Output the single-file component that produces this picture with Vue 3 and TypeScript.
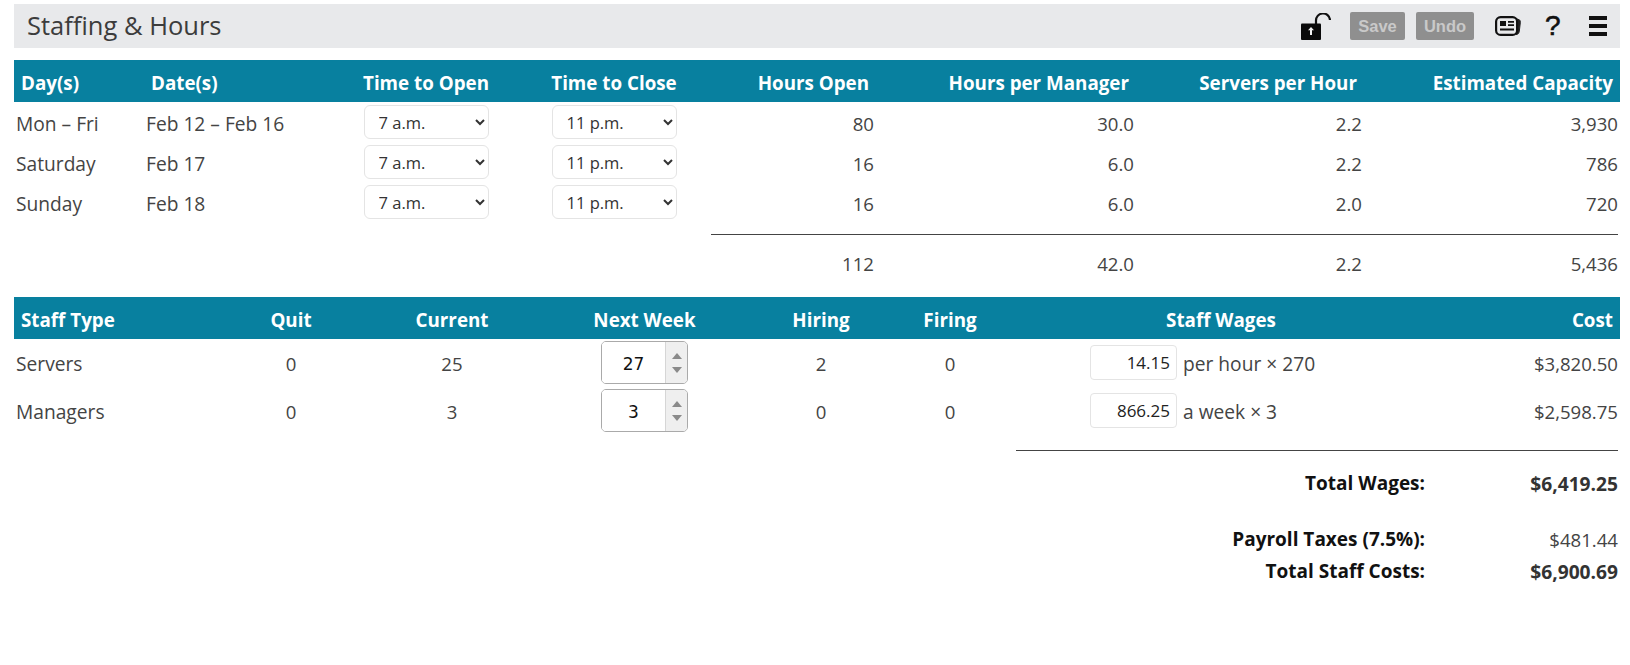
<template>
  <div class="page">
    <div class="titlebar">
      <h1 class="title">Staffing &amp; Hours</h1>
      <div class="tools">
        <svg class="lock" width="30" height="27" viewBox="0 0 30 27">
          <path d="M15 11V8a7 7 0 0 1 14-1" fill="none" stroke="#111" stroke-width="2.200" />
          <rect x="0" y="10.500" width="20" height="16.500" rx="1" fill="#0a0a0a" />
          <path d="M10 14l3 3.200h-2V22H9v-4.800H7z" fill="#f2f2f2" />
        </svg>
        <button class="gray-btn save">Save</button>
        <button class="gray-btn undo">Undo</button>
        <svg class="news" width="26" height="20" viewBox="0 0 26 20">
          <path d="M21 2.500l3 1.200c1.300.5 1.500 1.500 1.300 3l-1 8.500c-.3 2-1.300 3.300-3.300 3.300" fill="#222" stroke="#222" />
          <rect x="1.100" y="1.100" width="21" height="17.800" rx="4.500" fill="#e8e9eb" stroke="#111" stroke-width="2.200" />
          <rect x="5" y="5" width="6" height="5" fill="#111" />
          <path d="M13 5.800h6M13 9.200h6M5 13.500h14" stroke="#111" stroke-width="1.800" />
        </svg>
        <span class="help">?</span>
        <div class="burger"><i></i><i></i><i></i></div>
      </div>
    </div>

    <div class="grid hours head">
      <div class="left">Day(s)</div>
      <div class="left">Date(s)</div>
      <div class="center">Time to Open</div>
      <div class="center">Time to Close</div>
      <div class="right">Hours Open</div>
      <div class="right">Hours per Manager</div>
      <div class="right">Servers per Hour</div>
      <div class="right">Estimated Capacity</div>
    </div>
    <div v-for="row in hourRows" :key="row.day" class="grid hours body hour-row">
      <div class="left">{{ row.day }}</div>
      <div class="left">{{ row.dates }}</div>
      <div class="center ctl">
        <select class="time-select"><option>7 a.m.</option></select>
      </div>
      <div class="center ctl">
        <select class="time-select"><option>11 p.m.</option></select>
      </div>
      <div class="right">{{ row.open }}</div>
      <div class="right">{{ row.perManager }}</div>
      <div class="right">{{ row.perHour }}</div>
      <div class="right">{{ row.capacity }}</div>
    </div>
    <div class="rule hours-rule"></div>
    <div class="grid hours body total-row">
      <div></div>
      <div></div>
      <div></div>
      <div></div>
      <div class="right">112</div>
      <div class="right">42.0</div>
      <div class="right">2.2</div>
      <div class="right">5,436</div>
    </div>

    <div class="grid staff head">
      <div class="left">Staff Type</div>
      <div class="center">Quit</div>
      <div class="center">Current</div>
      <div class="center">Next Week</div>
      <div class="center">Hiring</div>
      <div class="center">Firing</div>
      <div class="center">Staff Wages</div>
      <div class="right">Cost</div>
    </div>
    <div v-for="row in staffRows" :key="row.type" class="grid staff body staff-row">
      <div class="left">{{ row.type }}</div>
      <div class="center">{{ row.quit }}</div>
      <div class="center">{{ row.current }}</div>
      <div class="center ctl">
        <div class="stepper">
          <input class="stepper-input" :value="row.next" />
          <div class="spin"><i class="up"></i><i class="down"></i></div>
        </div>
      </div>
      <div class="center">{{ row.hiring }}</div>
      <div class="center">{{ row.firing }}</div>
      <div class="wage">
        <input class="wage-input" :value="row.wage" />
        <span>{{ row.unit }}</span>
      </div>
      <div class="right">{{ row.cost }}</div>
    </div>
    <div class="rule staff-rule"></div>

    <div class="sum first"><b>Total Wages:</b><strong>$6,419.25</strong></div>
    <div class="sum taxes"><b>Payroll Taxes (7.5%):</b><span>$481.44</span></div>
    <div class="sum costs"><b>Total Staff Costs:</b><strong>$6,900.69</strong></div>
  </div>
</template>

<script setup lang="ts">
interface HourRow {
  day: string
  dates: string
  open: number
  perManager: string
  perHour: string
  capacity: string
}

interface StaffRow {
  type: string
  quit: number
  current: number
  next: number
  hiring: number
  firing: number
  wage: string
  unit: string
  cost: string
}

const hourRows: HourRow[] = [
  { day: 'Mon – Fri', dates: 'Feb 12 – Feb 16', open: 80, perManager: '30.0', perHour: '2.2', capacity: '3,930' },
  { day: 'Saturday', dates: 'Feb 17', open: 16, perManager: '6.0', perHour: '2.2', capacity: '786' },
  { day: 'Sunday', dates: 'Feb 18', open: 16, perManager: '6.0', perHour: '2.0', capacity: '720' },
]

const staffRows: StaffRow[] = [
  { type: 'Servers', quit: 0, current: 25, next: 27, hiring: 2, firing: 0, wage: '14.15', unit: 'per hour × 270', cost: '$3,820.50' },
  { type: 'Managers', quit: 0, current: 3, next: 3, hiring: 0, firing: 0, wage: '866.25', unit: 'a week × 3', cost: '$2,598.75' },
]
</script>

<style>
html,
body {
  background: #fff;
}
</style>

<style scoped>
.page {
  box-sizing: border-box;
  width: 1630px;
  height: 665px;
  padding: 4px 10px 0 14px;
  font-family: "Open Sans", "Noto Sans", sans-serif;
  font-size: 18.6px;
  color: #444;
  overflow: hidden;
}
.titlebar {
  display: flex;
  align-items: center;
  justify-content: space-between;
  height: 44px;
  background: #e8e9eb;
  padding: 0 13px;
}
.title {
  margin: 0 0 2px;
  font-weight: 400;
  font-size: 25.5px;
  color: #3c3c3c;
}
.tools {
  display: flex;
  align-items: center;
}
.lock {
  margin-right: 19px;
}
.gray-btn {
  height: 28px;
  padding: 0;
  border: none;
  border-radius: 2px;
  background: #8f8f8f;
  color: #c9c9c9;
  font-family: "Liberation Sans", Arial, sans-serif;
  font-weight: 700;
  font-size: 16.5px;
}
.save {
  width: 55px;
  margin-right: 11px;
}
.undo {
  width: 58px;
  margin-right: 21px;
}
.news {
  margin-right: 24px;
}
.help {
  width: 15px;
  margin-right: 29px;
  font-family: "Liberation Sans", Arial, sans-serif;
  font-size: 28px;
  line-height: 30px;
  color: #111;
  -webkit-text-stroke: 0.6px #111;
}
.burger {
  display: flex;
  flex-direction: column;
  gap: 4px;
  width: 18px;
}
.burger i {
  height: 4px;
  background: #111;
}
.grid {
  display: grid;
  align-items: center;
}
.hours {
  grid-template-columns: 130px 196px 172px 204px 160px 260px 228px 256px;
}
.staff {
  grid-template-columns: 186px 182px 140px 245px 108px 150px 392px 203px;
}
.head {
  height: 42px;
  margin-top: 12px;
  background: #08809f;
  color: #fff;
  font-weight: 700;
  font-size: 18.8px;
}
.grid .left,
.grid .center,
.grid .right {
  padding-top: 3px;
}
.grid .ctl {
  padding-top: 0;
}
.head .left {
  padding-left: 7px;
}
.head .right {
  padding-right: 7px;
}
.body .left {
  padding-left: 2px;
  font-size: 19.2px;
}
.body .right {
  padding-right: 2px;
}
.staff-row .left,
.staff-row .center,
.staff-row .right {
  padding-top: 1px;
}
.center {
  text-align: center;
}
.right {
  text-align: right;
}
.hour-row {
  height: 40px;
}
.time-select {
  box-sizing: border-box;
  display: block;
  width: 125px;
  height: 34px;
  margin: 0 auto;
  padding: 0 10px;
  border: 1px solid #e4e4e4;
  border-radius: 6px;
  background: #fff;
  color: #333;
  font-family: inherit;
  font-size: 16.5px;
}
.rule {
  height: 1px;
  background: #444;
}
.hours-rule {
  margin: 12px 2px 0 697px;
}
.total-row {
  height: 50px;
}
.grid.total-row .right {
  padding-top: 6px;
}
.staff-row {
  height: 48px;
}
.stepper {
  box-sizing: border-box;
  display: flex;
  width: 87px;
  height: 43px;
  margin: -2px auto 0;
  border: 1px solid #aaa;
  border-radius: 5px;
  overflow: hidden;
  background: #fff;
}
.stepper-input {
  flex: 1;
  width: 0;
  padding: 2px 0 0;
  border: none;
  outline: none;
  text-align: center;
  font-family: "DejaVu Sans", sans-serif;
  font-size: 17px;
  color: #111;
}
.spin {
  display: flex;
  flex-direction: column;
  align-items: center;
  justify-content: center;
  gap: 8px;
  width: 21px;
  background: #efefef;
  border-left: 1px solid #d6d6d6;
}
.spin i {
  width: 0;
  height: 0;
  border-left: 5px solid transparent;
  border-right: 5px solid transparent;
}
.spin .up {
  border-bottom: 6px solid #8a8a8a;
}
.spin .down {
  border-top: 6px solid #8a8a8a;
}
.wage {
  display: flex;
  align-items: center;
  gap: 6px;
  padding-left: 65px;
}
.wage span {
  padding-top: 1px;
  font-size: 19.2px;
}
.wage-input {
  box-sizing: border-box;
  width: 87px;
  height: 35px;
  margin-top: -2px;
  padding: 0 6px;
  border: 1px solid #e4e4e4;
  border-radius: 4px;
  outline: none;
  text-align: right;
  font-family: inherit;
  font-size: 17px;
  color: #222;
}
.staff-rule {
  margin: 15px 2px 0 1002px;
}
.sum {
  display: flex;
  justify-content: flex-end;
  align-items: center;
  padding-right: 2px;
  height: 30px;
}
.sum b {
  color: #111;
  font-weight: 700;
  font-size: 19px;
}
.sum strong {
  width: 193px;
  text-align: right;
  font-weight: 700;
  font-size: 19.2px;
  color: #333;
}
.sum span {
  width: 193px;
  text-align: right;
}
.first {
  margin-top: 17px;
}
.taxes {
  margin-top: 26px;
}
.costs {
  margin-top: 2px;
}
</style>
